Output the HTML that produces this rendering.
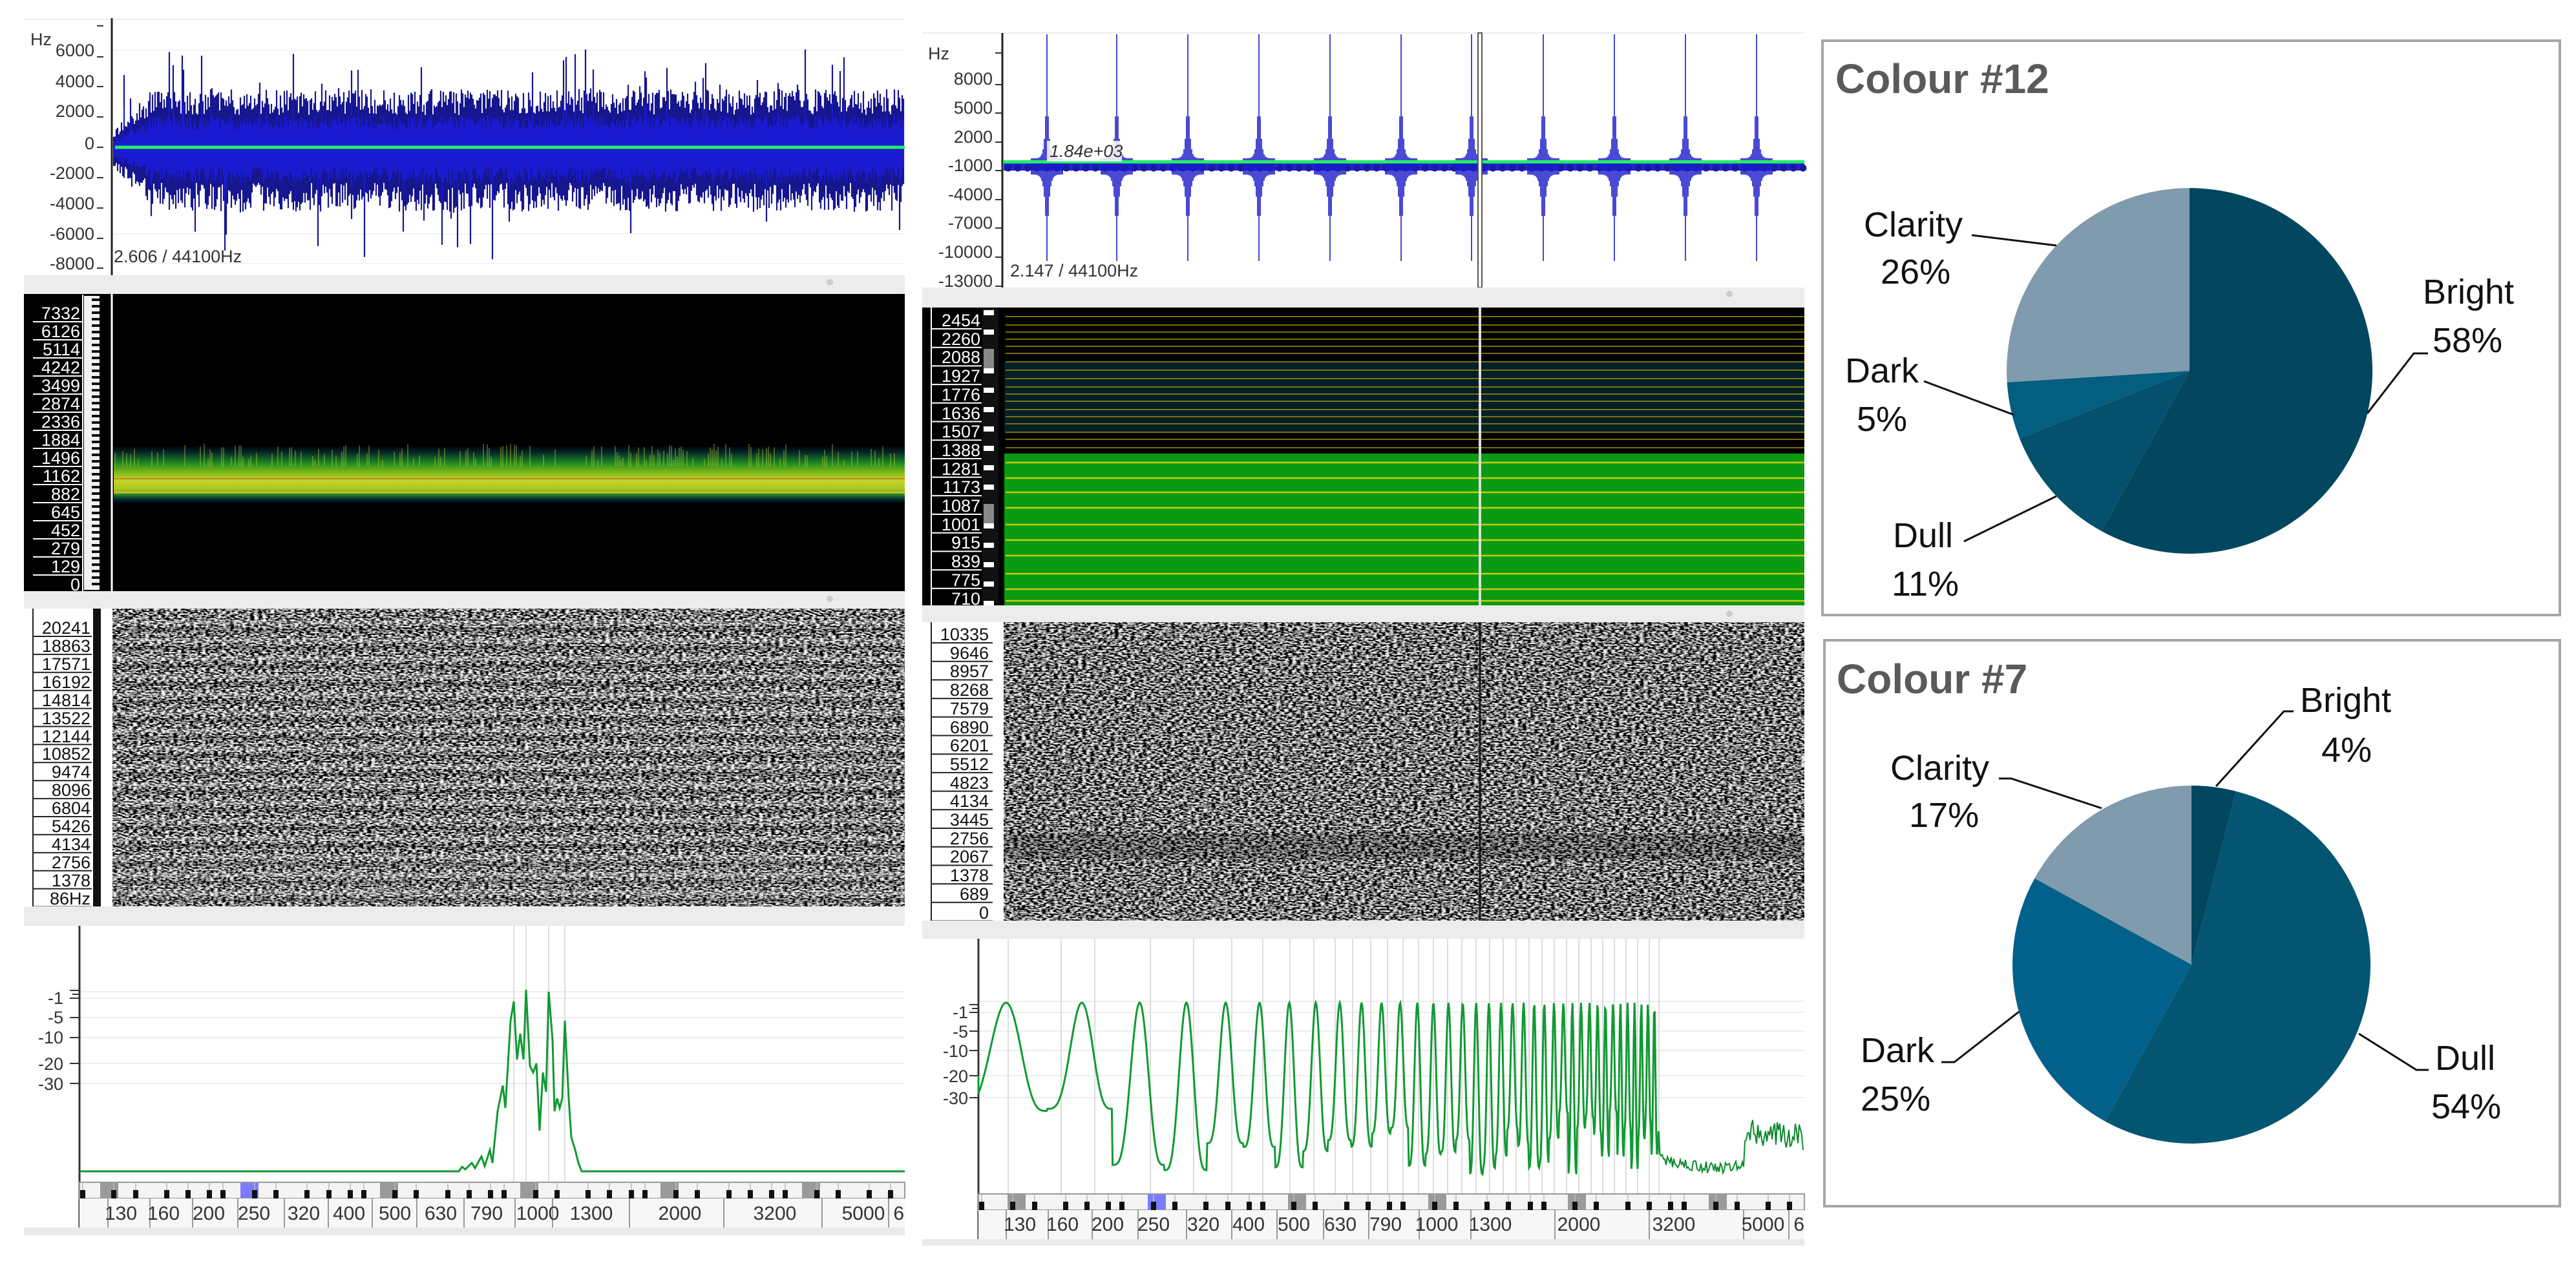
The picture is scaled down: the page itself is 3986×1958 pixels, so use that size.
<!DOCTYPE html>
<html><head><meta charset="utf-8">
<style>
html,body{margin:0;padding:0;background:#fff;}
body{width:3986px;height:1958px;overflow:hidden;}
svg{display:block;}
.ax{font-family:"Liberation Sans",sans-serif;font-size:27px;fill:#333;}
.lw{font-family:"Liberation Sans",sans-serif;font-size:27px;fill:#fff;text-anchor:end;}
.lb{font-family:"Liberation Sans",sans-serif;font-size:27px;fill:#111;text-anchor:end;}
.tk{font-family:"Liberation Sans",sans-serif;font-size:30px;fill:#333;}
.pl{font-family:"Liberation Sans",sans-serif;font-size:54px;fill:#111;}
.tt{font-family:"Liberation Sans",sans-serif;font-size:64px;font-weight:bold;fill:#5a5a5a;}
</style></head>
<body>
<svg id="s" width="3986" height="1958" viewBox="0 0 3986 1958" xmlns="http://www.w3.org/2000/svg">
<defs>
<filter id="nz" x="0" y="0" width="100%" height="100%">
<feTurbulence type="fractalNoise" baseFrequency="0.16 0.42" numOctaves="2" seed="3"/>
<feColorMatrix type="matrix" values="3.4 0 0 0 -1.45  3.4 0 0 0 -1.45  3.4 0 0 0 -1.45  0 0 0 0 1"/>
</filter>
<clipPath id="c1"><rect x="37" y="1850" width="1363" height="60"/></clipPath>
<clipPath id="c2"><rect x="1427" y="1870" width="1365" height="60"/></clipPath>
<linearGradient id="band" x1="0" y1="0" x2="0" y2="1">
<stop offset="0" stop-color="#000"/>
<stop offset="0.12" stop-color="#062a2a"/>
<stop offset="0.3" stop-color="#1f8a20"/>
<stop offset="0.45" stop-color="#7ab818"/>
<stop offset="0.6" stop-color="#c8d22a"/>
<stop offset="0.75" stop-color="#a8c820"/>
<stop offset="0.85" stop-color="#1c7a30"/>
<stop offset="0.93" stop-color="#04202a"/>
<stop offset="1" stop-color="#000"/>
</linearGradient>
</defs>

<!-- ============ LEFT PANEL ============ -->
<line x1="37" y1="30" x2="1400" y2="30" stroke="#eee" stroke-width="2"/>
<g stroke="#f3f3f3" stroke-width="2"><line x1="175" y1="78" x2="1400" y2="78"/><line x1="175" y1="362" x2="1400" y2="362"/><line x1="175" y1="408" x2="1400" y2="408"/></g>
<line x1="173" y1="28" x2="173" y2="428" stroke="#222" stroke-width="3"/>
<g id="wf1"></g>
<line x1="178" y1="228" x2="1400" y2="228" stroke="#22ee66" stroke-width="5"/>
<text class="ax" x="47" y="70" font-size="24">Hz</text>
<g class="ax" text-anchor="end">
<text x="146" y="87">6000</text><text x="146" y="135">4000</text><text x="146" y="181">2000</text><text x="146" y="231">0</text>
<text x="146" y="277">-2000</text><text x="146" y="324">-4000</text><text x="146" y="371">-6000</text><text x="146" y="417">-8000</text>
</g>
<g stroke="#333" stroke-width="2"><line x1="150" y1="40" x2="160" y2="40"/><line x1="150" y1="88" x2="160" y2="88"/><line x1="150" y1="134" x2="160" y2="134"/><line x1="150" y1="181" x2="160" y2="181"/><line x1="150" y1="228" x2="160" y2="228"/><line x1="150" y1="275" x2="160" y2="275"/><line x1="150" y1="322" x2="160" y2="322"/><line x1="150" y1="369" x2="160" y2="369"/><line x1="150" y1="415" x2="160" y2="415"/></g>
<text class="ax" x="176" y="406" font-size="28">2.606 / 44100Hz</text>

<rect x="37" y="426" width="1363" height="29" fill="#ececec"/>
<circle cx="1284" cy="437" r="5" fill="#ccc"/>

<!-- left spectrogram -->
<rect x="37" y="455" width="1363" height="460" fill="#000"/>
<rect x="176" y="690" width="1224" height="90" fill="url(#band)"/>
<g id="sp1"></g>
<rect x="130" y="458" width="24" height="455" fill="#f2f2f2"/>
<g id="pk1"></g>
<line x1="173" y1="455" x2="173" y2="915" stroke="#fff" stroke-width="3"/>
<g class="lw">
<text x="124" y="494">7332</text><text x="124" y="522">6126</text><text x="124" y="550">5114</text><text x="124" y="578">4242</text>
<text x="124" y="606">3499</text><text x="124" y="634">2874</text><text x="124" y="662">2336</text><text x="124" y="690">1884</text>
<text x="124" y="718">1496</text><text x="124" y="746">1162</text><text x="124" y="774">882</text><text x="124" y="802">645</text>
<text x="124" y="830">452</text><text x="124" y="858">279</text><text x="124" y="886">129</text><text x="124" y="914">0</text>
</g>
<g id="lg1" stroke="#fff" stroke-width="2"></g>

<rect x="37" y="915" width="1363" height="27" fill="#ececec"/>
<circle cx="1284" cy="927" r="5" fill="#ccc"/>

<!-- left noise -->
<rect x="37" y="942" width="1363" height="461" fill="#fff"/>
<rect x="174" y="942" width="1226" height="461" fill="#333"/>
<rect x="174" y="942" width="1226" height="461" filter="url(#nz)"/>
<g id="st1"></g>
<rect x="144" y="942" width="12" height="461" fill="#111"/>
<g class="lb">
<text x="140" y="981">20241</text><text x="140" y="1009">18863</text><text x="140" y="1037">17571</text><text x="140" y="1065">16192</text>
<text x="140" y="1093">14814</text><text x="140" y="1121">13522</text><text x="140" y="1149">12144</text><text x="140" y="1176">10852</text>
<text x="140" y="1204">9474</text><text x="140" y="1232">8096</text><text x="140" y="1260">6804</text><text x="140" y="1288">5426</text>
<text x="140" y="1316">4134</text><text x="140" y="1344">2756</text><text x="140" y="1372">1378</text><text x="140" y="1400">86Hz</text>
</g>
<g id="lg2" stroke="#222" stroke-width="2"></g>

<rect x="37" y="1403" width="1363" height="30" fill="#ececec"/>

<!-- left bottom plot -->
<g stroke="#eee" stroke-width="2"><line x1="123" y1="1535" x2="1400" y2="1535"/><line x1="123" y1="1545" x2="1400" y2="1545"/><line x1="123" y1="1575" x2="1400" y2="1575"/><line x1="123" y1="1606" x2="1400" y2="1606"/><line x1="123" y1="1646" x2="1400" y2="1646"/><line x1="123" y1="1677" x2="1400" y2="1677"/></g>
<g stroke="#ddd" stroke-width="2"><line x1="795" y1="1433" x2="795" y2="1830"/><line x1="814" y1="1433" x2="814" y2="1830"/><line x1="849" y1="1433" x2="849" y2="1830"/><line x1="874" y1="1433" x2="874" y2="1830"/></g>
<line x1="123" y1="1433" x2="123" y2="1900" stroke="#333" stroke-width="3"/>
<g class="ax" text-anchor="end" font-size="28">
<text x="98" y="1554">-1</text><text x="98" y="1584">-5</text><text x="98" y="1615">-10</text><text x="98" y="1656">-20</text><text x="98" y="1687">-30</text>
</g>
<g stroke="#333" stroke-width="2"><line x1="108" y1="1533" x2="122" y2="1533"/><line x1="112" y1="1539" x2="122" y2="1539"/><line x1="108" y1="1545" x2="122" y2="1545"/><line x1="108" y1="1575" x2="122" y2="1575"/><line x1="108" y1="1606" x2="122" y2="1606"/><line x1="108" y1="1646" x2="122" y2="1646"/><line x1="108" y1="1677" x2="122" y2="1677"/></g>
<path d="M123 1813 H710 L715 1806 L720 1810 L730 1800 L735 1808 L745 1790 L750 1805 L758 1780 L762 1800 L770 1720 L778 1680 L782 1715 L790 1580 L795 1550 L800 1640 L805 1600 L810 1640 L814 1532 L820 1650 L825 1660 L830 1646 L835 1750 L840 1660 L845 1690 L849 1535 L855 1610 L858 1720 L862 1700 L866 1715 L870 1700 L874 1580 L880 1700 L884 1760 L890 1780 L895 1800 L900 1813 H1400" fill="none" stroke="#119933" stroke-width="3"/>
<g id="tr1"></g>
<g class="tk" text-anchor="middle" clip-path="url(#c1)">
<text x="187" y="1888">130</text><text x="253" y="1888">160</text><text x="323" y="1888">200</text><text x="393" y="1888">250</text>
<text x="470" y="1888">320</text><text x="540" y="1888">400</text><text x="611" y="1888">500</text><text x="682" y="1888">630</text>
<text x="753" y="1888">790</text><text x="832" y="1888">1000</text><text x="915" y="1888">1300</text><text x="1052" y="1888">2000</text>
<text x="1199" y="1888">3200</text><text x="1336" y="1888">5000</text><text x="1399" y="1888">63</text>
</g>
<rect x="37" y="1900" width="1363" height="12" fill="#eaeaea"/>

<!-- ============ MIDDLE PANEL ============ -->
<line x1="1427" y1="51" x2="2792" y2="51" stroke="#eee" stroke-width="2"/>
<line x1="1551" y1="51" x2="1551" y2="445" stroke="#222" stroke-width="3"/>
<g id="wf2"></g>
<rect x="1553" y="248" width="1239" height="5" fill="#22ee66"/>
<rect x="2287" y="51" width="6" height="394" fill="#fff" stroke="#555" stroke-width="2"/>
<text class="ax" x="1436" y="92" font-size="26">Hz</text>
<g class="ax" text-anchor="end">
<text x="1536" y="131">8000</text><text x="1536" y="176">5000</text><text x="1536" y="221">2000</text><text x="1536" y="265">-1000</text>
<text x="1536" y="310">-4000</text><text x="1536" y="354">-7000</text><text x="1536" y="399">-10000</text><text x="1536" y="444">-13000</text>
</g>
<g stroke="#333" stroke-width="2"><line x1="1540" y1="82" x2="1550" y2="82"/><line x1="1540" y1="131" x2="1550" y2="131"/><line x1="1540" y1="175" x2="1550" y2="175"/><line x1="1540" y1="220" x2="1550" y2="220"/><line x1="1540" y1="264" x2="1550" y2="264"/><line x1="1540" y1="309" x2="1550" y2="309"/><line x1="1540" y1="353" x2="1550" y2="353"/><line x1="1540" y1="398" x2="1550" y2="398"/><line x1="1540" y1="443" x2="1550" y2="443"/></g>
<rect x="1620" y="218" width="116" height="32" fill="#fff" opacity="0.85"/>
<text class="ax" x="1624" y="243" font-style="italic">1.84e+03</text>
<text class="ax" x="1563" y="428" font-size="28">2.147 / 44100Hz</text>

<rect x="1427" y="445" width="1365" height="31" fill="#ececec"/>
<circle cx="2676" cy="455" r="5" fill="#ccc"/>

<!-- middle spectrogram -->
<rect x="1427" y="476" width="1365" height="461" fill="#000"/>
<rect x="1554" y="560" width="1238" height="110" fill="#06222c" opacity="0.9"/>
<rect x="1554" y="702" width="1238" height="235" fill="#0a9a12"/>
<g id="sp2"></g>
<rect x="1520" y="478" width="25" height="457" fill="#111"/>
<g id="pk2"></g>
<line x1="2290" y1="476" x2="2290" y2="937" stroke="#ddd" stroke-width="4"/>
<g class="lw">
<text x="1517" y="505">2454</text><text x="1517" y="534">2260</text><text x="1517" y="562">2088</text><text x="1517" y="591">1927</text>
<text x="1517" y="620">1776</text><text x="1517" y="649">1636</text><text x="1517" y="677">1507</text><text x="1517" y="706">1388</text>
<text x="1517" y="735">1281</text><text x="1517" y="763">1173</text><text x="1517" y="792">1087</text><text x="1517" y="821">1001</text>
<text x="1517" y="849">915</text><text x="1517" y="878">839</text><text x="1517" y="907">775</text><text x="1517" y="936">710</text>
</g>
<g id="lg3" stroke="#fff" stroke-width="2"></g>

<rect x="1427" y="937" width="1365" height="26" fill="#ececec"/>
<circle cx="2676" cy="950" r="5" fill="#ccc"/>

<!-- middle noise -->
<rect x="1427" y="963" width="1365" height="462" fill="#fff"/>
<rect x="1553" y="963" width="1239" height="462" fill="#444"/>
<rect x="1553" y="963" width="1239" height="462" filter="url(#nz)" opacity="0.95"/>
<g id="st2"></g>
<line x1="2290" y1="963" x2="2290" y2="1425" stroke="#111" stroke-width="3"/>
<rect x="1536" y="963" width="10" height="462" fill="#fff"/>
<g class="lb">
<text x="1530" y="991">10335</text><text x="1530" y="1020">9646</text><text x="1530" y="1048">8957</text><text x="1530" y="1077">8268</text>
<text x="1530" y="1106">7579</text><text x="1530" y="1135">6890</text><text x="1530" y="1163">6201</text><text x="1530" y="1192">5512</text>
<text x="1530" y="1221">4823</text><text x="1530" y="1249">4134</text><text x="1530" y="1278">3445</text><text x="1530" y="1307">2756</text>
<text x="1530" y="1335">2067</text><text x="1530" y="1364">1378</text><text x="1530" y="1393">689</text><text x="1530" y="1422">0</text>
</g>
<g id="lg4" stroke="#222" stroke-width="2"></g>

<rect x="1427" y="1425" width="1365" height="28" fill="#ececec"/>

<!-- middle bottom plot -->
<g stroke="#eee" stroke-width="2"><line x1="1514" y1="1550" x2="2792" y2="1550"/><line x1="1514" y1="1567" x2="2792" y2="1567"/><line x1="1514" y1="1596" x2="2792" y2="1596"/><line x1="1514" y1="1626" x2="2792" y2="1626"/><line x1="1514" y1="1665" x2="2792" y2="1665"/><line x1="1514" y1="1699" x2="2792" y2="1699"/></g>
<g id="vg2" stroke="#ddd" stroke-width="2"></g>
<line x1="1514" y1="1453" x2="1514" y2="1918" stroke="#333" stroke-width="3"/>
<g class="ax" text-anchor="end" font-size="28">
<text x="1498" y="1576">-1</text><text x="1498" y="1606">-5</text><text x="1498" y="1636">-10</text><text x="1498" y="1675">-20</text><text x="1498" y="1709">-30</text>
</g>
<g stroke="#333" stroke-width="2"><line x1="1500" y1="1555" x2="1513" y2="1555"/><line x1="1504" y1="1561" x2="1513" y2="1561"/><line x1="1500" y1="1567" x2="1513" y2="1567"/><line x1="1500" y1="1596" x2="1513" y2="1596"/><line x1="1500" y1="1626" x2="1513" y2="1626"/><line x1="1500" y1="1665" x2="1513" y2="1665"/><line x1="1500" y1="1699" x2="1513" y2="1699"/></g>
<path id="osc" d="" fill="none" stroke="#119933" stroke-width="3"/>
<path id="osc2" d="" fill="none" stroke="#0a8a2a" stroke-width="2"/>
<g id="tr2"></g>
<g class="tk" text-anchor="middle" clip-path="url(#c2)">
<text x="1578" y="1905">130</text><text x="1644" y="1905">160</text><text x="1714" y="1905">200</text><text x="1785" y="1905">250</text>
<text x="1862" y="1905">320</text><text x="1932" y="1905">400</text><text x="2002" y="1905">500</text><text x="2074" y="1905">630</text>
<text x="2144" y="1905">790</text><text x="2223" y="1905">1000</text><text x="2306" y="1905">1300</text><text x="2443" y="1905">2000</text>
<text x="2590" y="1905">3200</text><text x="2728" y="1905">5000</text><text x="2792" y="1905">63</text>
</g>
<rect x="1427" y="1918" width="1365" height="10" fill="#eaeaea"/>

<!-- ============ RIGHT PIES ============ -->
<rect x="2820" y="63" width="1141" height="889" fill="#fff" stroke="#a6a6a6" stroke-width="4"/>
<text class="tt" x="2840" y="144">Colour #12</text>
<path d="M3388 574 L3388 291 A283 283 0 1 1 3251.7 822 Z" fill="#03465f"/>
<path d="M3388 574 L3251.7 822 A283 283 0 0 1 3124.9 678.2 Z" fill="#05506c"/>
<path d="M3388 574 L3124.9 678.2 A283 283 0 0 1 3105.6 591.8 Z" fill="#035e80"/>
<path d="M3388 574 L3105.6 591.8 A283 283 0 0 1 3388 291 Z" fill="#7f9bad"/>
<g fill="none" stroke="#111" stroke-width="3">
<path d="M3051 364 L3182 380"/><path d="M2977 590 L3116 642"/><path d="M3039 838 L3182 768"/><path d="M3757 547 L3735 547 L3663 640"/>
</g>
<text class="pl" x="2884" y="366">Clarity</text><text class="pl" x="2910" y="439">26%</text>
<text class="pl" x="2855" y="592">Dark</text><text class="pl" x="2873" y="667">5%</text>
<text class="pl" x="2929" y="847">Dull</text><text class="pl" x="2927" y="922">11%</text>
<text class="pl" x="3749" y="470">Bright</text><text class="pl" x="3764" y="545">58%</text>

<rect x="2823" y="991" width="1138" height="876" fill="#fff" stroke="#a6a6a6" stroke-width="4"/>
<text class="tt" x="2842" y="1073">Colour #7</text>
<path d="M3391 1493 L3391 1216 A277 277 0 0 1 3459.9 1224.7 Z" fill="#03465f"/>
<path d="M3391 1493 L3459.9 1224.7 A277 277 0 1 1 3257.5 1735.7 Z" fill="#045571"/>
<path d="M3391 1493 L3257.5 1735.7 A277 277 0 0 1 3148.3 1359.5 Z" fill="#02618a"/>
<path d="M3391 1493 L3148.3 1359.5 A277 277 0 0 1 3391 1216 Z" fill="#7f9bad"/>
<g fill="none" stroke="#111" stroke-width="3">
<path d="M3549 1101 L3534 1101 L3429 1217"/><path d="M3093 1205 L3112 1205 L3252 1251"/><path d="M3004 1644 L3024 1644 L3124 1566"/><path d="M3758 1656 L3739 1656 L3650 1600"/>
</g>
<text class="pl" x="3559" y="1102">Bright</text><text class="pl" x="3592" y="1179">4%</text>
<text class="pl" x="2925" y="1207">Clarity</text><text class="pl" x="2954" y="1280">17%</text>
<text class="pl" x="2879" y="1644">Dark</text><text class="pl" x="2879" y="1719">25%</text>
<text class="pl" x="3768" y="1656">Dull</text><text class="pl" x="3762" y="1731">54%</text>
</svg>
<script>
(function(){
var NS="http://www.w3.org/2000/svg";
var seed=12345;function r(){seed=(seed*16807)%2147483647;return seed/2147483647;}
function el(g,tag,a){var e=document.createElementNS(NS,tag);for(var k in a)e.setAttribute(k,a[k]);document.getElementById(g).appendChild(e);return e;}
// left waveform
var d1="",d2="";
for(var x=176;x<1400;x+=2){var env=Math.min(1,(x-176)/60*0.7+0.3);
var a=(50+r()*40)*env,b=(55+r()*45)*env;if(r()<0.07)a+=r()*75;if(r()<0.07)b+=r()*90;
d1+="M"+x+" "+(228-a).toFixed(1)+"V"+(228+b).toFixed(1);
d2+="M"+x+" "+(228-a*0.55).toFixed(1)+"V"+(228+b*0.55).toFixed(1);}
el("wf1","path",{d:d1,stroke:"#16168f","stroke-width":2.2,fill:"none"});
el("wf1","path",{d:d2,stroke:"#1a1ad0","stroke-width":2,fill:"none"});
// middle waveform
var sp=[1620,1728,1838,1948,2058,2168,2277,2388,2498,2608,2718],dw="";
el("wf2","rect",{x:1553,y:252,width:1239,height:12,fill:"#2323d8"});
for(var x=1560;x<2792;x+=15){el("wf2","circle",{cx:x,cy:260,r:5.5,fill:"#1a1aa0"});}
sp.forEach(function(s){
 dw+="M"+s+" 53V404";
 for(var dx=-24;dx<=24;dx+=2){var ad=Math.abs(dx);if(ad<1)continue;
  var up=140*Math.exp(-ad/2.6)+4,dn=120*Math.exp(-ad/3.2)+8;dw+="M"+(s+dx)+" "+(249-up).toFixed(1)+"V"+(262+dn).toFixed(1);}
});
el("wf2","path",{d:dw,stroke:"#1c1cc8","stroke-width":1.6,fill:"none"});
// left spectrogram spikes
var ds="";for(var x=178;x<1400;x+=3){if(r()<0.35){var h=10+r()*25;ds+="M"+x+" "+(722-h)+"V722";}}
el("sp1","path",{d:ds,stroke:"#b8c830","stroke-width":1.5,opacity:0.5});
el("sp1","line",{x1:176,y1:741,x2:1400,y2:741,stroke:"#c86020","stroke-width":2,opacity:0.6});
el("sp1","line",{x1:176,y1:762,x2:1400,y2:762,stroke:"#d0c020","stroke-width":3});
// piano keys left
for(var y=462;y<912;y+=10){el("pk1","rect",{x:142,y:y,width:12,height:4,fill:"#111"});}
for(var i=0;i<16;i++){var yy=498+28*i;el("lg1","line",{x1:51,y1:yy,x2:128,y2:yy});}
el("lg1","line",{x1:128,y1:456,x2:128,y2:915});
// middle spectrogram lines
for(var y=490;y<700;y+=(r()<0.5?13:11)){el("sp2","line",{x1:1556,y1:y,x2:2792,y2:y,stroke:"#9a8a00","stroke-width":2,opacity:0.8});}
[716,740,762,786,812,836,860,888,912,930].forEach(function(y){el("sp2","line",{x1:1556,y1:y,x2:2792,y2:y,stroke:"#c8cc10","stroke-width":2.5});});
for(var y=480;y<935;y+=30){el("pk2","rect",{x:1522,y:y,width:16,height:8,fill:"#fff"});}
el("pk2","rect",{x:1522,y:540,width:16,height:30,fill:"#888"});
el("pk2","rect",{x:1522,y:780,width:16,height:30,fill:"#888"});
for(var i=0;i<16;i++){var yy=509+28.7*i;el("lg3","line",{x1:1441,y1:yy,x2:1519,y2:yy});}
el("lg3","line",{x1:1441,y1:476,x2:1441,y2:937});
// noise stripes
for(var i=0;i<16;i++){var yy=960+27.9*i;el("st1","rect",{x:174,y:yy,width:1226,height:7,fill:"#fff",opacity:0.22});
 el("st1","rect",{x:174,y:yy+12,width:1226,height:6,fill:"#000",opacity:0.2});
 el("lg2","line",{x1:51,y1:yy+25,x2:142,y2:yy+25});}
el("lg2","line",{x1:51,y1:942,x2:51,y2:1403});
for(var x=176;x<1400;x+=6){el("st1","line",{x1:x,y1:1330,x2:x,y2:1400,stroke:"#aaa","stroke-width":1.5,opacity:0.35});}
for(var i=0;i<16;i++){var yy=995+28.7*i;el("lg4","line",{x1:1441,y1:yy,x2:1536,y2:yy});}
el("lg4","line",{x1:1441,y1:963,x2:1441,y2:1425});
el("st2","rect",{x:1553,y:1290,width:1239,height:40,fill:"#000",opacity:0.2});
// tick rows
function trow(g,x0,x1,y0,labs,blue,grays,blacks){
 el(g,"rect",{x:x0,y:y0,width:x1-x0,height:25,fill:"#f4f4f4",stroke:"#999","stroke-width":2});
 grays.forEach(function(x){el(g,"rect",{x:x,y:y0+1,width:28,height:23,fill:"#9a9a9a"});});
 el(g,"rect",{x:blue,y:y0+1,width:28,height:23,fill:"#7b7bff"});
 blacks.forEach(function(x){el(g,"rect",{x:x,y:y0+12,width:8,height:13,fill:"#111"});el(g,"line",{x1:x+4,y1:y0,x2:x+4,y2:y0+12,stroke:"#bbb","stroke-width":1.5});});
 el(g,"rect",{x:x0,y:y0+25,width:x1-x0,height:45,fill:"#f7f7f7"});
 labs.forEach(function(x){el(g,"line",{x1:x,y1:y0+25,x2:x,y2:y0+70,stroke:"#999","stroke-width":2});});
}
function blacks(x0,x1,step){var a=[],pat=[0,1.6,2.7,4.3,5.4,6.5];for(var o=0;o<40;o++){pat.forEach(function(p){var x=x0+(o*7.2+p)*step;if(x<x1-6)a.push(Math.round(x));});}return a;}
trow("tr1",123,1400,1830,[167,232,298,368,440,508,576,645,718,797,855,974,1120,1272,1375],372,[155,588,805,1022,1241],blacks(124,1400,30.2));
trow("tr2",1514,2792,1848,[1557,1622,1690,1761,1836,1906,1976,2048,2118,2196,2276,2406,2552,2698,2768],1776,[1559,1993,2210,2426,2644],blacks(1515,2792,30.2));
// middle oscillation
var x,ph=-1.9,trough=1700;
var d="M1514 1665";var lastCycle=-1;
for(x=1514;x<=2567;x+=1.2){var p=140*Math.exp(-(x-1550)/380);if(p<9)p=9;ph+=2*Math.PI*1.2/p;
 var cyc=Math.floor((ph+Math.PI)/(2*Math.PI));if(cyc!=lastCycle){lastCycle=cyc;trough=1715+r()*105;}
 var c=Math.cos(ph);var t=Math.pow((1+c)/2,1.8);var y=trough-(trough-1552)*t;d+=" L"+x.toFixed(1)+" "+y.toFixed(1);}
d+=" L2568 1785";document.getElementById("osc").setAttribute("d",d);
var d2="M2568 1785";for(x=2570;x<2792;x+=2){var base=x<2700?1795+12*Math.sin((x-2570)/60):1765-15*Math.exp(-(x-2700)/80);var j=x<2700?18:40;d2+=" L"+x+" "+(base-r()*j+j/2).toFixed(1);}
document.getElementById("osc2").setAttribute("d",d2);
[1560,1642,1694,1780,1847,1906,1954,1996,2033,2066,2093,2121,2147,2171,2195,2218,2240,2262,2284,2305,2326,2346,2366,2386,2405,2424,2443,2462,2480,2498,2516,2534,2552,2567].forEach(function(x){el("vg2","line",{x1:x,y1:1453,x2:x,y2:1848});});
})();
</script>
</body></html>
